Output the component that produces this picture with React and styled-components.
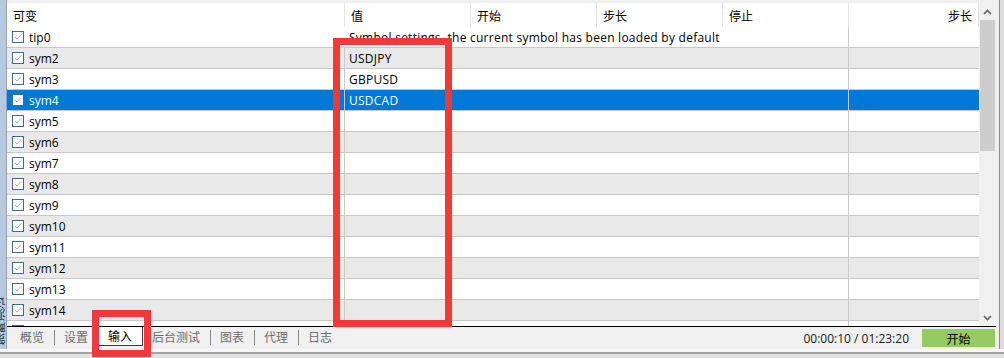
import { Fragment } from "react";
import styled, { createGlobalStyle } from "styled-components";

const GlobalStyle = createGlobalStyle`
  html, body {
    margin: 0;
    padding: 0;
    background: #f0f0f0;
  }
  body {
    font-family: "Open Sans", "Noto Sans CJK SC", sans-serif;
    font-size: 12px;
    color: #000;
  }
`;

const Frame = styled.div`
  position: relative;
  width: 1004px;
  height: 358px;
  overflow: hidden;
  display: flex;
  flex-direction: column;
  background: #f0f0f0;
`;

const Upper = styled.div`
  display: flex;
  height: 349px;
`;

const SideStrip = styled.div`
  width: 6px;
  background: #b7c9df;
  border-right: 1px solid #8ea3bf;
  overflow: hidden;
  display: flex;
  flex-direction: column;
  justify-content: flex-end;
  align-items: flex-end;
`;

const SideTitle = styled.span`
  writing-mode: vertical-rl;
  transform: rotate(180deg);
  font-family: "Noto Sans CJK SC", sans-serif;
  font-size: 12px;
  line-height: 12px;
  color: #1c2a3a;
  white-space: nowrap;
  padding-top: 4px;
`;

const Main = styled.div`
  flex: 1;
  display: flex;
  flex-direction: column;
  min-width: 0;
`;

const TopGap = styled.div`
  height: 3px;
  background: #f0f0f0;
`;

const TableArea = styled.div`
  display: flex;
  height: 323px;
`;

const Grid = styled.div`
  width: 972px;
  display: flex;
  flex-direction: column;
  overflow: hidden;
  background: #fff;
`;

const HeaderRow = styled.div`
  display: flex;
  height: 24px;
  flex-shrink: 0;
  background: #fff;
`;

const HeaderCell = styled.div`
  box-sizing: border-box;
  width: ${(p) => (p.$w ? `${p.$w}px` : "auto")};
  flex: ${(p) => (p.$w ? "none" : 1)};
  border-right: 1px solid #e4e4e4;
  padding: 0 6px;
  display: flex;
  align-items: center;
  justify-content: ${(p) => (p.$right ? "flex-end" : "flex-start")};
  font-family: "Noto Sans CJK SC", sans-serif;
  font-size: 12px;
`;

const Row = styled.div`
  display: flex;
  flex-shrink: 0;
  height: 20px;
  border-bottom: 1px solid #c9c9c9;
  background: ${(p) => (p.$selected ? "#0078d7" : p.$alt ? "#e9e9e9" : "#fff")};
  color: ${(p) => (p.$selected ? "#fff" : "#000")};
`;

const NameCell = styled.div`
  width: 337px;
  display: flex;
  align-items: center;
  gap: 5px;
  padding-left: 5px;
  box-sizing: border-box;
`;

const ValueCell = styled.div`
  box-sizing: border-box;
  width: 504px;
  display: flex;
  align-items: center;
  padding-left: 4px;
  white-space: nowrap;
  letter-spacing: 0.25px;
  border-left: 1px solid ${(p) => (p.$noLine ? "transparent" : "#c9c9c9")};
`;

const TailCell = styled.div`
  flex: 1;
  border-left: 1px solid #c9c9c9;
`;

const Box = styled.span`
  width: 12px;
  height: 12px;
  box-sizing: border-box;
  border: 1px solid #45698f;
  background: #fff;
  display: flex;
  align-items: center;
  justify-content: center;
`;

const Scrollbar = styled.div`
  width: 17px;
  background: #f0f0f0;
  display: flex;
  flex-direction: column;
  align-items: center;
`;

const ScrollArrow = styled.div`
  height: 17px;
  width: 17px;
  display: flex;
  align-items: center;
  justify-content: center;
  flex-shrink: 0;
`;

const ScrollTrack = styled.div`
  flex: 1;
  width: 15px;
`;

const Thumb = styled.div`
  height: 131px;
  background: #cdcdcd;
`;

const TabBar = styled.div`
  height: 22px;
  border-top: 1px solid #000;
  display: flex;
  align-items: flex-start;
  justify-content: space-between;
  padding-left: 4px;
  padding-right: 1px;
`;

const Tabs = styled.div`
  display: flex;
  align-items: center;
  height: 19px;
`;

const Tab = styled.div`
  height: 19px;
  padding: 0 10px 0 9px;
  display: flex;
  align-items: center;
  box-sizing: border-box;
  font-family: "Noto Sans CJK SC", sans-serif;
  font-size: 12px;
  line-height: 14px;
  color: ${(p) => (p.$active ? "#000" : "#6d6d6d")};
  background: ${(p) => (p.$active ? "#fff" : "transparent")};
  border-right: ${(p) => (p.$active ? "1px solid #3c3c3c" : "none")};
  border-bottom: ${(p) => (p.$active ? "1px solid #3c3c3c" : "none")};
`;

const TabSep = styled.span`
  width: 1px;
  height: 15px;
  margin-top: 2px;
  background: #8a8a8a;
`;

const Status = styled.div`
  display: flex;
  align-items: center;
  gap: 13px;
  height: 22px;
`;

const Timer = styled.span`
  font-size: 12px;
  color: #1a1a1a;
`;

const StartButton = styled.div`
  width: 73px;
  height: 18px;
  background: #96ca62;
  display: flex;
  align-items: center;
  justify-content: center;
  font-family: "Noto Sans CJK SC", sans-serif;
  font-size: 12px;
  color: #000;
`;

const RightEdge = styled.div`
  width: 8px;
  background: #dcdcdc;
  border-left: 3px solid #efefef;
  box-sizing: border-box;
  box-shadow: inset 1px 0 0 #8c8c8c;
`;

const BottomEdge = styled.div`
  height: 9px;
  background: linear-gradient(#f8f8f8 0 3px, #a4a4a4 3px 5px, #e2e2e2 5px);
`;

const Highlight = styled.div`
  position: absolute;
  left: ${(p) => p.$x}px;
  top: ${(p) => p.$y}px;
  width: ${(p) => p.$w}px;
  height: ${(p) => p.$h}px;
  box-sizing: border-box;
  border: 7px solid #f0393b;
  pointer-events: none;
`;

const Check = () => (
  <svg width="10" height="10" viewBox="0 0 10 10">
    <polyline points="2,5 4,7 8,2.5" fill="none" stroke="#ababab" strokeWidth="1" />
  </svg>
);

const Chevron = ({ up }) => (
  <svg width="9" height="6" viewBox="0 0 9 6">
    <polyline
      points={up ? "1,5 4.5,1.5 8,5" : "1,1 4.5,4.5 8,1"}
      fill="none"
      stroke="#606060"
      strokeWidth="1.6"
    />
  </svg>
);

const columns = [
  { label: "可变", w: 338 },
  { label: "值", w: 126 },
  { label: "开始", w: 126 },
  { label: "步长", w: 126 },
  { label: "停止", w: 126 },
  { label: "步长", right: true },
];

const rows = [
  { name: "tip0", value: "Symbol settings, the current symbol has been loaded by default", merged: true },
  { name: "sym2", value: "USDJPY" },
  { name: "sym3", value: "GBPUSD" },
  { name: "sym4", value: "USDCAD", selected: true },
  { name: "sym5" },
  { name: "sym6" },
  { name: "sym7" },
  { name: "sym8" },
  { name: "sym9" },
  { name: "sym10" },
  { name: "sym11" },
  { name: "sym12" },
  { name: "sym13" },
  { name: "sym14" },
  { name: "sym15" },
];

const tabs = ["概览", "设置", "输入", "后台测试", "图表", "代理", "日志"];
const activeTab = 2;

const App = () => {
  return (
    <>
      <GlobalStyle />
      <Frame>
        <Upper>
          <SideStrip>
            <SideTitle>策略测试</SideTitle>
          </SideStrip>
          <Main>
            <TopGap />
            <TableArea>
              <Grid>
                <HeaderRow>
                  {columns.map((c, i) => (
                    <HeaderCell key={i} $w={c.w} $right={c.right}>
                      {c.label}
                    </HeaderCell>
                  ))}
                </HeaderRow>
                {rows.map((r, i) => (
                  <Row key={r.name} $alt={i % 2 === 1} $selected={r.selected}>
                    <NameCell>
                      <Box>
                        <Check />
                      </Box>
                      {r.name}
                    </NameCell>
                    <ValueCell $noLine={r.merged}>{r.value}</ValueCell>
                    <TailCell />
                  </Row>
                ))}
              </Grid>
              <Scrollbar>
                <ScrollArrow>
                  <Chevron up />
                </ScrollArrow>
                <ScrollTrack>
                  <Thumb />
                </ScrollTrack>
                <ScrollArrow>
                  <Chevron />
                </ScrollArrow>
              </Scrollbar>
            </TableArea>
            <TabBar>
              <Tabs>
                {tabs.map((t, i) => (
                  <Fragment key={t}>
                    {i > 0 && i - 1 !== activeTab && <TabSep />}
                    <Tab $active={i === activeTab}>{t}</Tab>
                  </Fragment>
                ))}
              </Tabs>
              <Status>
                <Timer>00:00:10 / 01:23:20</Timer>
                <StartButton>开始</StartButton>
              </Status>
            </TabBar>
          </Main>
          <RightEdge />
        </Upper>
        <BottomEdge />
        <Highlight $x={333} $y={38} $w={119} $h={289} />
        <Highlight $x={92} $y={310} $w={59} $h={47} />
      </Frame>
    </>
  );
};

export default App;
